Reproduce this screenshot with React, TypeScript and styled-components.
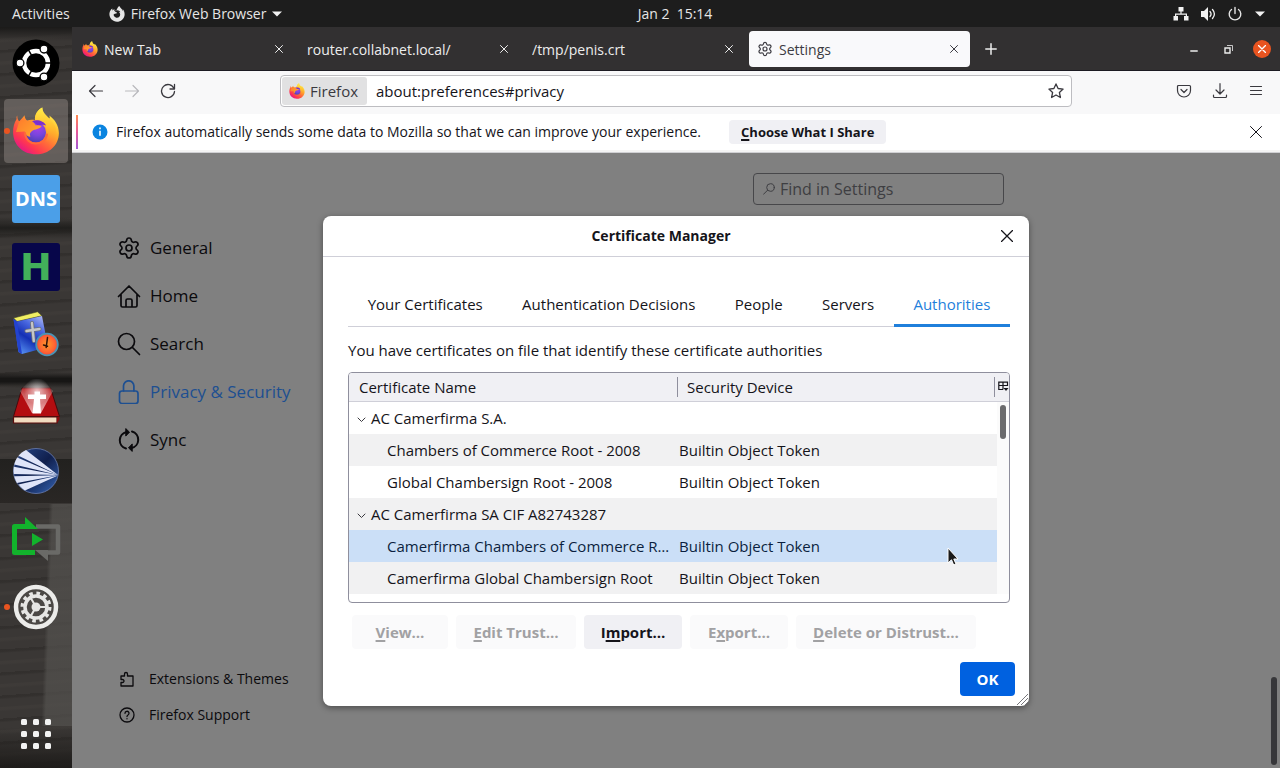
import React from "react";
import styled, { createGlobalStyle, css } from "styled-components";
import { Settings } from "lucide-react";
import { FaFirefoxBrowser } from "react-icons/fa";

const GlobalStyle = createGlobalStyle`
  *, *::before, *::after { box-sizing: border-box; }
  body { margin: 0; background: #1d1d1d; }
  button, input { font: inherit; color: inherit; }
  button { border: 0; padding: 0; background: none; }
  body {
    font-family: "Open Sans", "Noto Sans", sans-serif;
    font-size: 14px;
    line-height: 20px;
  }
`;

/* ---------- Shell ---------- */

const Desktop = styled.div`
  min-height: 100vh;
  display: flex;
  flex-direction: column;
`;

const TopBar = styled.header`
  height: 27px;
  display: flex;
  align-items: center;
  padding: 0 14px 0 12px;
  background: #1d1d1d;
  color: #e6e6e6;
`;

const TopGroup = styled.div<{ $end?: boolean }>`
  flex: 1 1 ${(p) => (p.$end ? "0px" : "72px")};
  display: flex;
  align-items: center;
  gap: ${(p) => (p.$end ? "11px" : "39px")};
  justify-content: ${(p) => (p.$end ? "flex-end" : "flex-start")};
`;

const TopButton = styled.button`
  display: flex;
  align-items: center;
  gap: 6px;
  white-space: pre;
  svg { display: block; }
`;

const Workspace = styled.div`
  flex: 1;
  display: flex;
`;

const Dock = styled.nav`
  width: 72px;
  flex: none;
  display: flex;
  flex-direction: column;
  align-items: center;
  gap: 4px;
  padding: 4px 0 2px;
  background:
    linear-gradient(92deg, transparent 49px, rgba(84, 82, 79, 0.7) 53px) 0 477px / 100% 222px no-repeat,
    linear-gradient(#1b1a19, transparent) 0 0 / 100% 14px no-repeat,
    linear-gradient(transparent, #171615 40%, #171615 60%, transparent) 0 345px / 100% 16px no-repeat,
    linear-gradient(transparent, #201f1d 50%, transparent) 0 190px / 100% 22px no-repeat,
    linear-gradient(#22211f, #2a2725) 0 432px / 100% 44px no-repeat,
    linear-gradient(transparent, #1e1c1a) 0 700px / 100% 41px no-repeat,
    repeating-linear-gradient(176deg, rgba(20, 18, 16, 0.2) 0 2px, transparent 4px 11px, rgba(90, 84, 78, 0.12) 12px 14px, transparent 16px 23px),
    #3a3735;
`;

const DockItem = styled.button<{ $active?: boolean }>`
  width: 64px;
  height: 64px;
  display: grid;
  place-items: center;
  position: relative;
  border-radius: 4px;
  background: ${(p) => (p.$active ? "rgba(150, 142, 138, 0.45)" : "transparent")};
  svg { display: block; }
`;

const RunningDot = styled.span`
  position: absolute;
  left: 0;
  top: 29px;
  width: 6px;
  height: 6px;
  border-radius: 50%;
  background: #e95420;
`;

const LetterTile = styled.span<{ $bg: string; $fg: string; $size: number; $family: string }>`
  width: 48px;
  height: 48px;
  display: grid;
  place-items: center;
  border-radius: 3px;
  background: ${(p) => p.$bg};
  color: ${(p) => p.$fg};
  font: 700 ${(p) => p.$size}px/48px ${(p) => p.$family}, sans-serif;
`;

const AppsSlot = styled.div`
  margin-top: auto;
`;

/* ---------- Browser ---------- */

const Browser = styled.main`
  flex: 1;
  min-width: 0;
  display: flex;
  flex-direction: column;
`;

const TabStrip = styled.div`
  height: 44px;
  display: flex;
  align-items: center;
  padding: 1px 9px 0 2px;
  background: #323031;
  color: #ededed;
  border-bottom: 1px solid #1c1b22;
`;

const BrowserTab = styled.div<{ $active?: boolean }>`
  flex: 0 1 221px;
  min-width: 0;
  height: 36px;
  margin-right: 4px;
  display: flex;
  align-items: center;
  gap: 6px;
  padding: 0 8px;
  border-radius: 4px;
  ${(p) => p.$active && css`background: #f9f9fb; color: #3c3b42;`}
`;

const TabLabel = styled.button`
  flex: 1;
  min-width: 0;
  padding-top: 2px;
  text-align: left;
  white-space: nowrap;
  overflow: hidden;
`;

const IconButton = styled.button<{ $size?: number }>`
  flex: none;
  width: ${(p) => p.$size ?? 16}px;
  height: ${(p) => p.$size ?? 16}px;
  display: grid;
  place-items: center;
  svg { display: block; }
  &:disabled { color: #b9b9bd; }
`;

const WindowControls = styled.div`
  margin-left: auto;
  display: flex;
  align-items: center;
  gap: 16px;
`;

const CloseWindow = styled(IconButton)`
  border-radius: 50%;
  background: #e95420;
  color: #fff;
`;

const Toolbar = styled.div`
  height: 43px;
  display: flex;
  align-items: center;
  padding: 0 16px 3px;
  background: #f8f8f9;
  color: #3a393f;
  font-size: 15px;
`;

const ToolGroup = styled.div<{ $end?: boolean }>`
  flex: 1 0 0;
  display: flex;
  align-items: center;
  gap: 20px;
  justify-content: ${(p) => (p.$end ? "flex-end" : "flex-start")};
`;

const AddressBar = styled.form`
  flex: 0 1 792px;
  height: 32px;
  display: flex;
  align-items: center;
  padding: 1px 7px 1px 1px;
  background: #fff;
  border: 1px solid #bdbdc1;
  border-radius: 4px;
`;

const Identity = styled.span`
  height: 28px;
  display: flex;
  align-items: center;
  gap: 5px;
  padding: 0 9px 0 7px;
  border-radius: 3px;
  background: #e1e1e2;
  color: #3a393f;
`;

const AddressInput = styled.input`
  flex: 1;
  min-width: 0;
  border: 0;
  outline: 0;
  padding: 0 9px;
  background: transparent;
  color: #15141a;
`;

const Banner = styled.div`
  height: 39px;
  display: flex;
  align-items: center;
  padding: 0 16px 3px 4px;
  background: linear-gradient(#fff 36px, #f4f4f4 36px);
  border-bottom: 1px solid #d0d0d3;
  color: #15141a;
`;

const BannerAccent = styled.span`
  width: 2px;
  height: 34px;
  margin-right: 14px;
  background: linear-gradient(#ff8a50, #e55a9b 50%, #a35ad8);
`;

const BannerText = styled.span`
  margin: 0 28px 0 8px;
`;

const SmallButton = styled.button`
  height: 24px;
  padding: 0 12px;
  border-radius: 4px;
  background: #f0f0f4;
  font-size: 13px;
  font-weight: 700;
`;

const Push = styled.span`
  margin-left: auto;
`;

/* ---------- Settings page ---------- */

const Page = styled.section`
  flex: 1;
  position: relative;
  display: flex;
  background: #808080;
  color: #0b0a0d;
`;

const Sidebar = styled.nav`
  width: 300px;
  flex: none;
  display: flex;
  flex-direction: column;
  padding: 71px 0 35px 45px;
`;

const SideLink = styled.a<{ $current?: boolean; $small?: boolean }>`
  height: ${(p) => (p.$small ? 36 : 48)}px;
  display: flex;
  align-items: center;
  gap: ${(p) => (p.$small ? 14 : 9)}px;
  padding-left: ${(p) => (p.$small ? 2 : 0)}px;
  color: ${(p) => (p.$current ? "#1d4f91" : "inherit")};
  font-size: ${(p) => (p.$small ? 14 : 17)}px;
  text-decoration: none;
`;

const SideSpacer = styled.div`
  flex: 1;
`;

const PageBody = styled.div`
  flex: 1;
  display: flex;
  justify-content: flex-end;
  align-items: flex-start;
  padding: 20px 276px 0 0;
`;

const SearchBox = styled.label`
  width: 251px;
  height: 32px;
  display: flex;
  align-items: center;
  gap: 4px;
  padding: 0 8px;
  border: 1px solid #47474a;
  border-radius: 4px;
  color: #3e3e42;
`;

const SearchInput = styled.input`
  flex: 1;
  min-width: 0;
  border: 0;
  padding: 0;
  outline: 0;
  background: transparent;
  font-size: 16px;
  &::placeholder { color: #3e3e42; opacity: 1; }
`;

const PageThumb = styled.span`
  position: absolute;
  right: 3px;
  bottom: 3px;
  width: 6px;
  height: 88px;
  border-radius: 3px;
  background: #37373a;
`;

/* ---------- Dialog ---------- */

const Overlay = styled.div`
  position: absolute;
  inset: 0;
  display: flex;
  align-items: center;
  justify-content: center;
`;

const Dialog = styled.div`
  position: relative;
  width: 706px;
  max-width: 100%;
  background: #fff;
  color: #15141a;
  border-radius: 8px;
  box-shadow: 0 2px 6px rgba(0, 0, 0, 0.4);
  font-size: 15px;
`;

const DialogHead = styled.div`
  height: 41px;
  display: flex;
  align-items: center;
  padding: 0 14px 0 0;
  border-bottom: 1px solid #cfcfd8;
`;

const DialogTitle = styled.h1`
  flex: 1;
  margin: 0;
  text-align: center;
  font-size: 14px;
  line-height: 20px;
`;

const DialogBody = styled.div`
  padding: 26px 19px 0 25px;
`;

const Tabs = styled.div`
  display: flex;
  height: 44px;
  border-bottom: 1px solid #cfcfd8;
`;

const Tab = styled.button<{ $selected?: boolean }>`
  flex: 1 1 auto;
  height: 44px;
  padding-top: 1px;
  border-bottom: 3px solid ${(p) => (p.$selected ? "#1f7fdb" : "transparent")};
  color: ${(p) => (p.$selected ? "#1f7fdb" : "inherit")};
`;

const Hint = styled.p`
  margin: 13px 0 12px;
`;

const TreeBox = styled.div`
  height: 231px;
  position: relative;
  overflow: hidden;
  border: 1px solid #8f8f9d;
  border-radius: 4px;
`;

const Tree = styled.table`
  width: 100%;
  table-layout: fixed;
  border-collapse: collapse;
`;

const HeadCell = styled.th<{ $width?: number }>`
  width: ${(p) => (p.$width ? p.$width + "px" : "auto")};
  height: 29px;
  padding: 0;
  text-align: left;
  font-weight: 400;
  background: #f0f0f4;
  border-bottom: 1px solid #cfcfd8;
`;

const HeadLabel = styled.span<{ $lined?: boolean }>`
  display: block;
  padding-left: ${(p) => (p.$lined ? 9 : 10)}px;
  margin-right: 2px;
  ${(p) => p.$lined && css`border: solid #8f8f9d; border-width: 0 1px;`}
`;

const TreeRow = styled.tr<{ $tone: "plain" | "alt" | "selected" }>`
  height: 32px;
  background: ${(p) => ({ plain: "#fff", alt: "#f1f1f2", selected: "#cbdff7" })[p.$tone]};
  color: ${(p) => (p.$tone === "selected" ? "#0b1f3f" : "inherit")};
`;

const NameCell = styled.td<{ $child?: boolean }>`
  padding: 0 0 0 ${(p) => (p.$child ? 38 : 8)}px;
  white-space: nowrap;
`;

const Twisty = styled.svg`
  width: 9px;
  height: 9px;
  margin-right: 5px;
`;

const DeviceCell = styled.td`
  padding: 0 0 0 2px;
`;

const GutterCell = styled.td`
  padding: 0;
  background: #fbfbfb;
`;

const TreeThumb = styled.span`
  position: absolute;
  right: 3px;
  top: 32px;
  width: 6px;
  height: 34px;
  border-radius: 3px;
  background: #6b6b6d;
`;

const Actions = styled.div`
  display: flex;
  gap: 8px;
  padding: 12px 4px 0;
`;

const DialogButton = styled.button<{ $primary?: boolean; $width?: number }>`
  width: ${(p) => p.$width}px;
  height: 34px;
  border-radius: 4px;
  font-weight: 700;
  background: ${(p) => (p.$primary ? "#0061e0" : "#f0f0f4")};
  color: ${(p) => (p.$primary ? "#fff" : "#15141a")};
  &:disabled { background: #fafafb; color: #a1a1a3; }
`;

const AccessKey = styled.u`
  text-underline-offset: 2px;
  text-decoration-thickness: 2px;
`;

const DialogFoot = styled.div`
  display: flex;
  justify-content: flex-end;
  padding: 13px 14px 10px;
`;

const Grip = styled.svg`
  position: absolute;
  right: 0;
  bottom: 0;
`;

const Pointer = styled.svg`
  position: absolute;
  right: 70px;
  top: 331px;
`;

/* ---------- Icons ---------- */

const Stroke = ({ size = 16, box = 16, width = 1.2, children }: { size?: number; box?: number; width?: number; children: React.ReactNode }) => (
  <svg width={size} height={size} viewBox={`0 0 ${box} ${box}`} fill="none" stroke="currentColor" strokeWidth={width} strokeLinecap="round" strokeLinejoin="round" aria-hidden="true">
    {children}
  </svg>
);

const Cross = ({ size = 8, width = 1 }: { size?: number; width?: number }) => (
  <Stroke size={size} box={size} width={width}>
    <path d={`M.5.5 ${size - 0.5} ${size - 0.5}M${size - 0.5}.5.5 ${size - 0.5}`} />
  </Stroke>
);

const FirefoxLogo = ({ size, id }: { size: number; id: string }) => (
  <svg width={size} height={size} viewBox="0 0 48 48" aria-hidden="true">
    <defs>
      <linearGradient id={`${id}a`} x1="0.85" y1="0.1" x2="0.2" y2="0.95">
        <stop offset="0" stopColor="#fff44f" />
        <stop offset="0.3" stopColor="#ffb02a" />
        <stop offset="0.55" stopColor="#ff6f38" />
        <stop offset="0.8" stopColor="#ff3750" />
        <stop offset="1" stopColor="#e3158a" />
      </linearGradient>
      <linearGradient id={`${id}b`} x1="0.5" y1="0" x2="0.4" y2="1">
        <stop offset="0" stopColor="#fff04a" />
        <stop offset="0.55" stopColor="#ffbd2e" />
        <stop offset="1" stopColor="#ff8a2c" stopOpacity="0" />
      </linearGradient>
      <radialGradient id={`${id}c`} cx="0.6" cy="0.25" r="0.8">
        <stop offset="0" stopColor="#a940e8" />
        <stop offset="0.5" stopColor="#7a45dd" />
        <stop offset="1" stopColor="#4a3fb0" />
      </radialGradient>
      <linearGradient id={`${id}d`} x1="0" y1="0" x2="1" y2="0.6">
        <stop offset="0" stopColor="#ff7a2c" />
        <stop offset="1" stopColor="#ffa72c" />
      </linearGradient>
    </defs>
    <path fill={`url(#${id}a)`} d="M5.2 8.5C5.2 11 6 13 7.2 14.5 8.5 12.8 10.5 11.2 12.5 8.3 12.8 10.6 13.5 12.3 15 13.6 17.5 12.8 20.5 12.6 23 13.2 22.5 8 25.5 3.2 30.3.6 30.5 5.5 34 8.2 37.5 11.5 38 10.5 37.6 9.6 37.2 8.6 42.5 12.2 46.8 18.5 46.9 26 46.9 38.5 37 47.3 24 47.3 11 47.3 1.3 38 1.1 25.5 1 20.5 2.2 15.5 4.6 12 4.3 10.8 4.5 9.5 5.2 8.5Z" />
    <path fill={`url(#${id}b)`} d="M30.3.6C25.5 3.2 22.5 8 23 13.2 27 13 31 14 33 18 36 24 35 31 30 35 38 36 44 30 44 23 44 16 36 12 32.5 7.5 30.8 5.2 30.2 3 30.3.6Z" />
    <circle cx="23.8" cy="25.2" r="10.2" fill={`url(#${id}c)`} />
    <path fill="#7a2fd0" d="M20 14.2C25 12 32 14 34 18.5 31 17 29 18 26 18.5Z" />
    <path fill={`url(#${id}d)`} d="M7.2 14.5C9.5 12.7 13 12.6 15.5 14 19.5 13.5 22.5 15.5 23.5 18.2 26.5 18 28 18.3 29.5 19 27.5 22.5 23 22 20 24 18 25.5 17.3 27.5 18.5 29.5 16.5 30.2 13.2 28.5 12.8 24.5L4 25Z" />
    <path fill="none" stroke="#ff6a38" strokeWidth="2" strokeLinecap="round" d="M13 26C13.5 33 18.5 36.5 24 36.6 29 36.5 34 33.5 35 27.5" />
  </svg>
);

const UbuntuLogo = () => (
  <svg width="48" height="48" viewBox="0 0 48 48" aria-hidden="true">
    <circle cx="24" cy="24" r="23.5" fill="#000" />
    <circle cx="24" cy="24" r="12" fill="none" stroke="#fff" strokeWidth="4.5" />
    <path stroke="#000" strokeWidth="1.5" d="M24 24h18M24 24 15 8.4M24 24l-9 15.6" />
    <g fill="#fff" stroke="#000" strokeWidth="1.3">
      <circle cx="8" cy="24" r="3.9" /><circle cx="32" cy="10.1" r="3.9" /><circle cx="32" cy="38" r="3.9" />
    </g>
  </svg>
);

const BibleTimeLogo = () => (
  <svg width="48" height="48" viewBox="0 0 48 48" aria-hidden="true">
    <defs>
      <linearGradient id="cover" x1="0.8" y1="0" x2="0.2" y2="1">
        <stop offset="0" stopColor="#a9b4f2" /><stop offset="0.3" stopColor="#4a68e0" /><stop offset="0.6" stopColor="#1430b4" /><stop offset="1" stopColor="#5a96f4" />
      </linearGradient>
      <radialGradient id="clock"><stop offset="0" stopColor="#ff9a2a" /><stop offset="0.7" stopColor="#ff6532" /><stop offset="1" stopColor="#f04a3a" /></radialGradient>
    </defs>
    <path fill="#f0ee63" stroke="#3c3f25" strokeWidth=".6" d="m1.5 7 24-6.2 4.5 4L5 10.5Z" />
    <path fill="url(#cover)" d="m1.5 8 3.5 2.5L30 5l6 31-26 7-3.5-2Z" />
    <path fill="#2343cf" d="m1.5 8 3.5 2.5L10 43l-3.5-2Z" />
    <path stroke="#6d7078" strokeWidth="4" strokeLinecap="round" d="m20 12 1.8 18M14.5 20l13-2" />
    <path stroke="#c4c6c9" strokeWidth="2.4" strokeLinecap="round" d="m20 12 1.8 18M14.5 20l13-2" />
    <circle cx="35" cy="33.5" r="10.8" fill="url(#clock)" stroke="#4b93b4" strokeWidth="1.8" />
    <path stroke="#301208" strokeWidth="1.5" strokeLinecap="round" d="m35.5 26.5-1.3 10M31.5 34l4 1.3" fill="none" />
  </svg>
);

const XiphosLogo = () => (
  <svg width="48" height="48" viewBox="0 0 48 48" aria-hidden="true">
    <defs>
      <linearGradient id="ray" x1="0" y1="0" x2="0" y2="1">
        <stop offset="0" stopColor="#d9a0a0" stopOpacity="0" /><stop offset=".4" stopColor="#e9b8b8" stopOpacity=".45" /><stop offset="1" stopColor="#ffd9d9" stopOpacity=".8" />
      </linearGradient>
      <radialGradient id="halo"><stop offset="0" stopColor="#fff" stopOpacity=".7" /><stop offset="1" stopColor="#fff" stopOpacity="0" /></radialGradient>
    </defs>
    <path fill="#b30d10" stroke="#3b0507" strokeWidth=".8" d="M10 9h28.5l9 28.5h-46Z" />
    <path fill="#f1dcc0" stroke="#5a0c0c" strokeWidth="1.2" d="M1.5 38h43.5v6H1.5Z" />
    <path fill="#8a0b0d" d="m45 38 2.5-.5v3l-2.500 3.500Z" />
    <path fill="url(#ray)" d="M8 12 16 3h17l8 9-12 22h-9Z" />
    <circle cx="25" cy="12" r="13" fill="url(#halo)" />
    <path fill="#fff" d="M22.5 12.5H28v3h6V20h-6l1 14.5h-8.5L22 20h-6v-4.5h6.5Z" />
  </svg>
);

const FanLogo = () => (
  <svg width="48" height="48" viewBox="0 0 48 48" aria-hidden="true">
    <defs><linearGradient id="fan" x1="0" y1="0" x2="1" y2="1"><stop offset="0" stopColor="#27488a" /><stop offset=".5" stopColor="#101f4d" /><stop offset="1" stopColor="#3565b5" /></linearGradient></defs>
    <circle cx="24" cy="24" r="22.5" fill="url(#fan)" stroke="#6b7fb4" strokeWidth=".8" />
    <g fill="#dfe4f8">
      <path d="M46 28 14 3C11 4.4 8.500 6.300 6.500 8.800Z" /><path d="M46 28 5.300 10.500C4 12.500 2.800 15 2.300 17.500Z" /><path d="M46 28 1.900 19.800C1.500 22.500 1.500 24.500 1.900 27Z" /><path d="M46 28.200 2.200 29.300C2.900 32 3.800 34 5 36Z" /><path d="M46 28.500 6.500 37.600C8.300 40 10.500 42 13 43.500Z" />
    </g>
  </svg>
);

const LoopLogo = () => (
  <svg width="50" height="48" viewBox="0 0 50 48" aria-hidden="true">
    <path fill="none" stroke="#6a6a67" strokeWidth="4.5" strokeLinejoin="round" d="M25 11.5h22v26H34" />
    <path fill="#6a6a67" d="M24 35h13v11Z" />
    <path fill="none" stroke="#12b32c" strokeWidth="5" strokeLinejoin="round" d="M24 37.5H3.5v-26H17" />
    <path fill="#12b32c" d="M14 2 27 14H14ZM21 18l11 6.500L21 31Z" />
  </svg>
);

const SettingsLogo = () => (
  <svg width="46" height="46" viewBox="0 0 46 46" aria-hidden="true">
    <circle cx="23" cy="23" r="20" fill="#4b4845" stroke="#ececea" strokeWidth="4.5" />
    <circle cx="23" cy="23" r="13.8" fill="none" stroke="#e6e6e4" strokeWidth="3.4" strokeDasharray="3.6 3.625" />
    <circle cx="23" cy="23" r="11" fill="none" stroke="#e6e6e4" strokeWidth="3.5" />
    <circle cx="23" cy="23" r="4.5" fill="#e6e6e4" />
    <path stroke="#e6e6e4" strokeWidth="2" d="M23 23h11M23 23l-5.5-9.5M23 23l-5.5 9.5" />
  </svg>
);

const AppGrid = () => (
  <svg width="32" height="32" viewBox="0 0 32 32" fill="#f2f2f2" aria-hidden="true">
    {[1, 13, 25].map((y) => [1, 13, 25].map((x) => <rect key={`${x}-${y}`} x={x} y={y} width="6" height="6" rx="1.5" />))}
  </svg>
);

const Caret = () => <svg width="10" height="6" viewBox="0 0 10 6" fill="#f2f2f2" aria-hidden="true"><path d="M0 .5h10L5 5.5Z" /></svg>;

const sideIcons = {
  home: <Stroke size={24} box={24} width={1.7}><path d="M1.5 12.5 12 2l10.5 10.5M4 10.5v11A1.5 1.5 0 0 0 5.5 23h13a1.5 1.5 0 0 0 1.5-1.5v-11M9 23v-6.5A1.5 1.5 0 0 1 10.5 15h3a1.5 1.5 0 0 1 1.5 1.5V23" /></Stroke>,
  search: <Stroke size={24} box={24} width={1.7}><circle cx="9.5" cy="9.5" r="8" /><path d="m15.5 15.5 7 7" /></Stroke>,
  lock: <Stroke size={24} box={24} width={1.7}><rect x="2.5" y="11" width="18.5" height="12.5" rx="2.5" /><path d="M6.5 11V6a5.2 5.2 0 0 1 10.4 0v5" /></Stroke>,
  sync: <Stroke size={24} box={24} width={2}><path d="M9 20.5A8.5 8.5 0 0 1 9.5 4M15 3.5A8.5 8.5 0 0 1 14.5 20" /><path fill="currentColor" strokeWidth="1" d="m9 .8 3.5 3.4L9 7.8ZM15 23.2l-3.5-3.4L15 16.2Z" /></Stroke>,
};

/* ---------- Data ---------- */

const certificates: { name: string; device?: string; tone: "plain" | "alt" | "selected" }[] = [
  { name: "AC Camerfirma S.A.", tone: "plain" },
  { name: "Chambers of Commerce Root - 2008", device: "Builtin Object Token", tone: "alt" },
  { name: "Global Chambersign Root - 2008", device: "Builtin Object Token", tone: "plain" },
  { name: "AC Camerfirma SA CIF A82743287", tone: "alt" },
  { name: "Camerfirma Chambers of Commerce R…", device: "Builtin Object Token", tone: "selected" },
  { name: "Camerfirma Global Chambersign Root", device: "Builtin Object Token", tone: "alt" },
];

const dialogTabs = ["Your Certificates", "Authentication Decisions", "People", "Servers", "Authorities"];

export default function App() {
  return (
    <Desktop>
      <GlobalStyle />
      <TopBar>
        <TopGroup>
          <TopButton>Activities</TopButton>
          <TopButton><FaFirefoxBrowser size={16} />Firefox Web Browser<Caret /></TopButton>
        </TopGroup>
        <TopButton>{"Jan 2  15:14"}</TopButton>
        <TopGroup $end>
          <IconButton aria-label="Network">
            <svg width="16" height="14" viewBox="0 0 16 14" fill="#f2f2f2"><path d="M5.5 0h5v4.5H8.6V6.5H14V9h1.5v4.5H11V9h1.8V7.700H3.200V9H5v4.500H.5V9H2V6.500h5.400v-2H5.500Z" /></svg>
          </IconButton>
          <IconButton aria-label="Volume">
            <svg width="16" height="16" viewBox="0 0 16 16" fill="#f2f2f2"><path d="M1 5h3l4-4v14l-4-4H1Z" /><path fill="none" stroke="#f2f2f2" strokeWidth="1.3" strokeLinecap="round" d="M10 5.5c1.3 1.5 1.3 3.5 0 5M12.5 3.5c2.3 2.7 2.3 6.3 0 9" /></svg>
          </IconButton>
          <IconButton aria-label="Power"><Stroke width={1.4}><path d="M8 1.5v6M4.5 3.500a5.800 5.800 0 1 0 7 0" /></Stroke></IconButton>
          <IconButton aria-label="System menu" $size={12}><Caret /></IconButton>
        </TopGroup>
      </TopBar>

      <Workspace>
        <Dock>
          <DockItem aria-label="Ubuntu"><UbuntuLogo /></DockItem>
          <DockItem aria-label="Firefox" $active><RunningDot /><FirefoxLogo size={48} id="dock" /></DockItem>
          <DockItem><LetterTile $bg="#4b9fe8" $fg="#fff" $size={20} $family='"Noto Sans"'>DNS</LetterTile></DockItem>
          <DockItem><LetterTile $bg="#07064a" $fg="#42b05a" $size={38} $family='"DejaVu Sans"'>H</LetterTile></DockItem>
          <DockItem aria-label="Bible reader"><BibleTimeLogo /></DockItem>
          <DockItem aria-label="Bible study"><XiphosLogo /></DockItem>
          <DockItem aria-label="Fan"><FanLogo /></DockItem>
          <DockItem aria-label="Loop"><LoopLogo /></DockItem>
          <DockItem aria-label="Settings"><RunningDot /><SettingsLogo /></DockItem>
          <AppsSlot><DockItem aria-label="Show applications"><AppGrid /></DockItem></AppsSlot>
        </Dock>

        <Browser>
          <TabStrip>
            <BrowserTab><FirefoxLogo size={16} id="tab" /><TabLabel>New Tab</TabLabel><IconButton aria-label="Close New Tab"><Cross /></IconButton></BrowserTab>
            <BrowserTab><TabLabel>router.collabnet.local/</TabLabel><IconButton aria-label="Close router tab"><Cross /></IconButton></BrowserTab>
            <BrowserTab><TabLabel>/tmp/penis.crt</TabLabel><IconButton aria-label="Close certificate tab"><Cross /></IconButton></BrowserTab>
            <BrowserTab $active><Settings size={16} strokeWidth={1.8} /><TabLabel>Settings</TabLabel><IconButton aria-label="Close Settings"><Cross /></IconButton></BrowserTab>
            <IconButton aria-label="New tab" $size={34}><Stroke size={12} box={12} width={1.5}><path d="M6 .8v10.4M.8 6h10.4" /></Stroke></IconButton>
            <WindowControls>
              <IconButton aria-label="Minimize" $size={18}><Stroke size={8} box={8} width={1.5}><path d="M.8 6h6.4" /></Stroke></IconButton>
              <IconButton aria-label="Restore" $size={18}><svg width="9" height="9" viewBox="0 0 9 9" fill="none" stroke="currentColor"><path d="M1 3h5v5H1Z" strokeWidth="1.4" /><path d="M3 .5h5.5V6" strokeWidth=".8" /></svg></IconButton>
              <CloseWindow aria-label="Close window" $size={18}><Cross size={8} width={1.4} /></CloseWindow>
            </WindowControls>
          </TabStrip>

          <Toolbar>
            <ToolGroup>
              <IconButton aria-label="Back"><Stroke><path d="M14.5 8h-13M7 2.5 1.5 8 7 13.5" /></Stroke></IconButton>
              <IconButton aria-label="Forward" disabled><Stroke><path d="M1.5 8h13M9 2.5 14.5 8 9 13.5" /></Stroke></IconButton>
              <IconButton aria-label="Reload"><Stroke width={1.3}><path d="M14 5.5A6.5 6.5 0 1 0 14.5 8.5" /><path d="M14.5 1.5v4.5H10" /></Stroke></IconButton>
            </ToolGroup>
            <AddressBar onSubmit={(e) => e.preventDefault()}>
              <Identity><FirefoxLogo size={16} id="url" />Firefox</Identity>
              <AddressInput aria-label="Address" defaultValue="about:preferences#privacy" />
              <IconButton type="button" aria-label="Bookmark"><Stroke width={1.3}><path d="m8 .9 2.1 4.6 5 .6-3.7 3.4 1 5L8 12l-4.4 2.500 1-5L.9 6.100l5-.6Z" /></Stroke></IconButton>
            </AddressBar>
            <ToolGroup $end>
              <IconButton aria-label="Save to Pocket"><Stroke><path d="M2.5 2.5h11a1 1 0 0 1 1 1V7.5a6.5 6.5 0 0 1-13 0V3.5a1 1 0 0 1 1-1ZM5 6.5l3 3 3-3" /></Stroke></IconButton>
              <IconButton aria-label="Downloads"><Stroke><path d="M8 .7v10M4 7l4 4 4-4M1.5 12v1.5a1 1 0 0 0 1 1h11a1 1 0 0 0 1-1V12" /></Stroke></IconButton>
              <IconButton aria-label="Menu"><Stroke><path d="M2.5 3.5h11M2.5 7.5h11M2.5 11.5h11" /></Stroke></IconButton>
            </ToolGroup>
          </Toolbar>

          <Banner>
            <BannerAccent />
            <svg width="16" height="16" viewBox="0 0 16 16" aria-hidden="true"><circle cx="8" cy="8" r="7.5" fill="#0a84e0" /><path stroke="#fff" strokeWidth="1.6" d="M8 3.5v1.7M8 6.7v5" /></svg>
            <BannerText>Firefox automatically sends some data to Mozilla so that we can improve your experience.</BannerText>
            <SmallButton><AccessKey>C</AccessKey>hoose What I Share</SmallButton>
            <Push><IconButton aria-label="Dismiss"><Cross size={12} /></IconButton></Push>
          </Banner>

          <Page>
            <Sidebar>
              <SideLink href="#general"><Settings size={24} strokeWidth={1.7} />General</SideLink>
              <SideLink href="#home">{sideIcons.home}Home</SideLink>
              <SideLink href="#search">{sideIcons.search}Search</SideLink>
              <SideLink href="#privacy" $current>{sideIcons.lock}Privacy &amp; Security</SideLink>
              <SideLink href="#sync">{sideIcons.sync}Sync</SideLink>
              <SideSpacer />
              <SideLink href="#addons" $small><Stroke width={1.3}><path d="M2 5.5V5h3.5V3a1.5 1.5 0 0 1 3 0v2H14v10H2v-3.5h1.5a1.5 1.5 0 0 0 0-3H2Z" /></Stroke>Extensions &amp; Themes</SideLink>
              <SideLink href="#support" $small><Stroke width={1.3}><circle cx="8" cy="8" r="7" /><path d="M6 6.3a2 2 0 1 1 3 1.7c-.7.4-1 .8-1 1.5M8 11.6v.2" /></Stroke>Firefox Support</SideLink>
            </Sidebar>
            <PageBody>
              <SearchBox>
                <Stroke size={14} box={14} width={1}><circle cx="8.5" cy="5.5" r="3.8" /><path d="m5.5 8.3-4 4" /></Stroke>
                <SearchInput placeholder="Find in Settings" aria-label="Find in Settings" />
              </SearchBox>
            </PageBody>
            <PageThumb />

            <Overlay>
              <Dialog role="dialog" aria-labelledby="dialog-title">
                <DialogHead>
                  <DialogTitle id="dialog-title">Certificate Manager</DialogTitle>
                  <IconButton aria-label="Close dialog"><Cross size={12} width={1.3} /></IconButton>
                </DialogHead>
                <DialogBody>
                  <Tabs role="tablist">
                    {dialogTabs.map((t) => <Tab key={t} role="tab" aria-selected={t === "Authorities"} $selected={t === "Authorities"}>{t}</Tab>)}
                  </Tabs>
                  <Hint>You have certificates on file that identify these certificate authorities</Hint>
                  <TreeBox>
                    <Tree>
                      <thead>
                        <tr>
                          <HeadCell $width={328}><HeadLabel>Certificate Name</HeadLabel></HeadCell>
                          <HeadCell><HeadLabel $lined>Security Device</HeadLabel></HeadCell>
                          <HeadCell $width={12}>
                            <IconButton aria-label="Choose columns" $size={12}>
                              <svg width="11" height="11" viewBox="0 0 11 11" fill="none" stroke="#15141a" strokeWidth="1.2"><path d="M5 8.5H.8V1.2h8.7V5M.8 4.5h8.7M5 1.2v7.3" /><path d="M5.5 7h5L8 10Z" fill="#15141a" stroke="none" /></svg>
                            </IconButton>
                          </HeadCell>
                        </tr>
                      </thead>
                      <tbody>
                        {certificates.map((c) => (
                          <TreeRow key={c.name} $tone={c.tone}>
                            <NameCell $child={!!c.device}>
                              {!c.device && <Twisty viewBox="0 0 9 9" fill="none" stroke="#3a393f" strokeLinecap="round"><path d="m1 3 3.5 3.5L8 3" /></Twisty>}
                              {c.name}
                            </NameCell>
                            <DeviceCell>{c.device}</DeviceCell>
                            <GutterCell />
                          </TreeRow>
                        ))}
                      </tbody>
                    </Tree>
                    <TreeThumb />
                  </TreeBox>
                  <Actions>
                    <DialogButton disabled $width={96}><AccessKey>V</AccessKey>iew…</DialogButton>
                    <DialogButton disabled $width={120}><AccessKey>E</AccessKey>dit Trust…</DialogButton>
                    <DialogButton $width={98}>I<AccessKey>m</AccessKey>port…</DialogButton>
                    <DialogButton disabled $width={98}>E<AccessKey>x</AccessKey>port…</DialogButton>
                    <DialogButton disabled $width={180}><AccessKey>D</AccessKey>elete or Distrust…</DialogButton>
                  </Actions>
                </DialogBody>
                <DialogFoot><DialogButton $primary $width={55}>OK</DialogButton></DialogFoot>
                <Grip width="12" height="12" viewBox="0 0 12 12" stroke="#77777b" strokeWidth="1"><path d="M0 11 11 0M4 11l7-7M8 11l3-3" /></Grip>
                <Pointer width="12" height="20" viewBox="0 0 12 20" fill="#1b1b1b" stroke="#fff" strokeWidth="1"><path d="M1 1v15l3.5-3.2 2.2 5.2 2.3-1-2.2-5H11Z" /></Pointer>
              </Dialog>
            </Overlay>
          </Page>
        </Browser>
      </Workspace>
    </Desktop>
  );
}
